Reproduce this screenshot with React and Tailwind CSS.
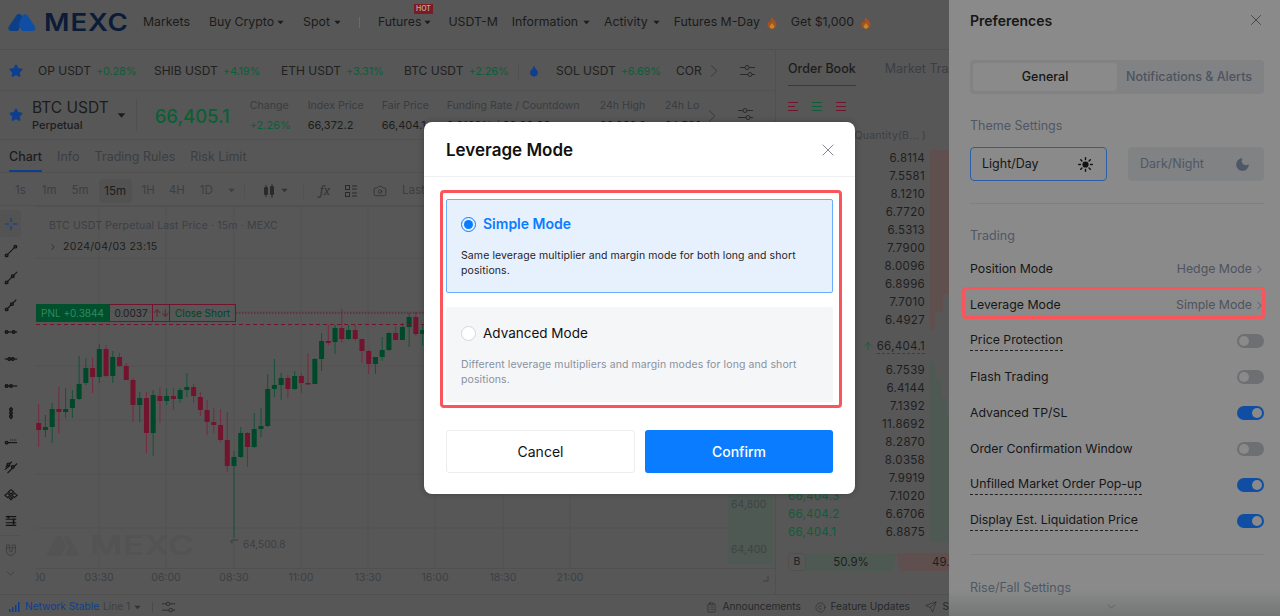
import React from "react";
import { Star, ChevronRight, ChevronDown, X, Moon, Camera, ClipboardList, Copyright, Send, Magnet, Droplet, ArrowUp } from "lucide-react";

const Caret = ({ className = "" }) => (
  <svg width="7" height="5" viewBox="0 0 8 5" className={`shrink-0 ${className}`}><path d="M0.5 0.5h7L4 4.500z" fill="currentColor" /></svg>
);
const Fire = () => (
  <svg width="10" height="12" viewBox="0 0 11 13" className="ml-[7px] shrink-0">
    <path d="M5.500 0C6 2.500 10.500 4.500 10.500 8.200 10.500 11 8.300 13 5.500 13S.5 11 .5 8.200C.5 6.500 1.500 5 2.600 4.200c0 1 .4 1.800 1.100 2.100C3.600 4 4.200 1.800 5.500 0z" fill="#a8501e" />
    <path d="M5.600 6.500c.4 1.300 2.400 2.200 2.400 3.900 0 1.400-1.100 2.400-2.500 2.400S3 11.800 3 10.400c0-1.400 1.900-2.300 2.600-3.900z" fill="#b9892b" />
  </svg>
);

function Header() {
  return (
    <div className="h-[50px] flex items-center border-b border-[#4f4f4f] pl-2 pb-[4px] shrink-0 text-[12.300px] text-[#1b1b1b] whitespace-nowrap">
      <svg width="28" height="17" viewBox="0 0 29 18" className="shrink-0">
        <path d="M8.500 1.500 C10 -.5 12.500 -.5 14 1.500 L15.500 4 L10.500 18 H3 C.5 18 -.8 15.500 .5 13.500z" fill="#0c3f86" />
        <path d="M15 1.800 C16.500 -.4 19.200 -.4 20.600 1.800 L28.300 13.500 C29.600 15.600 28 18 25.800 18 H14.500 L10.800 11.500z" fill="#0f4ea3" />
      </svg>
      <span className="ml-[8px] w-[83px] inline-block origin-left scale-x-[1.15] text-[24px] leading-none font-semibold tracking-[0.800px] text-[#0b1b38]">MEXC</span>
      <span className="ml-[16px]">Markets</span>
      <span className="ml-[19px] flex items-center gap-[3px]">Buy Crypto<Caret /></span>
      <span className="ml-[19px] flex items-center gap-[4px]">Spot<Caret /></span>
      <span className="ml-[18px] w-px h-[11px] bg-[#6a6a6a]" />
      <span className="ml-[18px] flex items-center gap-[3px] relative">Futures<Caret />
        <span className="absolute -top-[9px] left-[36px] bg-[#7e1a22] text-[#b9a2a2] text-[7px] leading-[10px] px-[2px] font-semibold">HOT</span>
      </span>
      <span className="ml-[17px]">USDT-M</span>
      <span className="ml-[14px] flex items-center gap-[5px]">Information<Caret /></span>
      <span className="ml-[14px] flex items-center gap-[5px]">Activity<Caret /></span>
      <span className="ml-[14px] flex items-center">Futures M-Day<Fire /></span>
      <span className="ml-[14px] flex items-center">Get $1,000<Fire /></span>
    </div>
  );
}

const Pct = ({ children }) => <span className="text-[#0d5e3a] text-[11px] tracking-[-0.150px] ml-[5px]">{children}</span>;

function Sliders({ className = "" }) {
  return (
    <svg width="15" height="14" viewBox="0 0 15 14" className={`shrink-0 ${className}`} fill="none" stroke="#2a2a2a" strokeWidth="1">
      <path d="M0 3.500h5M9 3.500h6M0 10.500h8M12 10.500h3" />
      <circle cx="7" cy="3.500" r="2" /><circle cx="10" cy="10.500" r="2" />
    </svg>
  );
}

function Ticker() {
  return (
    <div className="h-[41px] flex items-center pt-[1px] border-b border-[#515151] text-[12px] text-[#202020] shrink-0 whitespace-nowrap">
      <Star size={14} className="ml-[9px] text-[#0e3f8e] fill-[#0e3f8e] shrink-0" />
      <span className="ml-[15px] w-[97px] shrink-0">OP USDT<Pct>+0.28%</Pct></span>
      <span className="ml-[19px] w-[108px] shrink-0">SHIB USDT<Pct>+4.19%</Pct></span>
      <span className="ml-[19px] w-[104px] shrink-0">ETH USDT<Pct>+3.31%</Pct></span>
      <span className="ml-[19px] w-[105px] shrink-0">BTC USDT<Pct>+2.26%</Pct></span>
      <span className="ml-[9px] w-px h-4 bg-[#505050] shrink-0" />
      <Droplet size={12} className="ml-[9px] text-[#0e3f8e] fill-[#0e3f8e] shrink-0" />
      <span className="ml-[16px] w-[101px] shrink-0">SOL USDT<Pct>+6.69%</Pct></span>
      <span className="ml-[19px] w-[26px] shrink-0">COR</span>
      <ChevronRight size={22} strokeWidth={0.900} className="ml-[1px] text-[#333] shrink-0" />
      <Sliders className="ml-[15px]" />
    </div>
  );
}

const Stat = ({ label, value, className = "", green }) => (
  <div className={`flex flex-col gap-[3px] text-[11px] leading-[16px] whitespace-nowrap shrink-0 ${className}`}>
    <span className="text-[10.600px] text-[#393c41]">{label}</span>
    <span className={green ? "text-[#0d5e3a]" : "text-[#1c1c1c]"}>{value}</span>
  </div>
);

function SymbolRow() {
  return (
    <div className="h-[49px] flex items-center border-b border-[#515151] shrink-0 text-[#1c1c1c] overflow-hidden">
      <Star size={14} className="ml-[9px] text-[#0e3f8e] fill-[#0e3f8e] shrink-0" />
      <div className="ml-[9px] flex flex-col shrink-0 -mt-[1px]">
        <span className="text-[15.500px] leading-[20px]">BTC USDT</span>
        <span className="text-[11px] leading-[14px] font-medium">Perpetual</span>
      </div>
      <Caret className="ml-[9px] scale-125" />
      <span className="ml-[11px] w-px h-[32px] bg-[#4f4f4f] shrink-0" />
      <span className="ml-[18px] w-[76px] mt-[3px] text-[18.500px] font-medium text-[#0a6035] shrink-0">66,405.1</span>
      <Stat className="ml-[19px] w-[40px]" label="Change" value="+2.26%" green />
      <Stat className="ml-[18px] w-[56px]" label="Index Price" value="66,372.2" />
      <Stat className="ml-[18px] w-[49px]" label="Fair Price" value="66,404.1" />
      <Stat className="ml-[16px] w-[138px]" label="Funding Rate / Countdown" value="0.0100% / 00:00:00" />
      <Stat className="ml-[15px] w-[50px]" label="24h High" value="66,939.9" />
      <div className="w-[35px] ml-[15px] overflow-hidden shrink-0"><Stat label="24h Low" value="64,500.8" /></div>
      <ChevronRight size={22} strokeWidth={0.900} className="ml-[1px] mt-[2px] text-[#333] shrink-0" />
      <Sliders className="ml-[15px] -mt-[3px]" />
    </div>
  );
}

function Tabs() {
  return (
    <div className="h-[33px] flex items-start pl-[9px] border-b border-[#515151] shrink-0 text-[12.500px] text-[#3b3e44]">
      <span className="h-[32px] leading-[33px] text-[#1c1c1c] font-medium border-b-2 border-[#0e3f8e]">Chart</span>
      <span className="ml-[15px] leading-[33px]">Info</span>
      <span className="ml-[15px] leading-[33px]">Trading Rules</span>
      <span className="ml-[15px] leading-[33px]">Risk Limit</span>
    </div>
  );
}

function Toolbar() {
  return (
    <div className="h-[33px] flex items-center pt-[3px] border-b border-[#515151] shrink-0 text-[11.500px] text-[#3b3e44] whitespace-nowrap">
      <span className="ml-[15px]">1s</span>
      <span className="ml-[16px]">1m</span>
      <span className="ml-[15px]">5m</span>
      <span className="ml-[10px] h-[24px] w-[33px] leading-[24px] text-center bg-[#525252] rounded-sm text-[#1c1c1c]">15m</span>
      <span className="ml-[10px]">1H</span>
      <span className="ml-[14px]">4H</span>
      <span className="ml-[15px]">1D</span>
      <Caret className="ml-[15px]" />
      <span className="ml-[9px] w-px h-4 bg-[#515151]" />
      <svg width="12" height="14" viewBox="0 0 12 14" className="ml-[18px]" fill="#2a2a2a"><rect x="1" y="3" width="4" height="8" rx="1" /><rect x="7" y="2" width="4" height="9" rx="1" /><path d="M3 1v12M9 0v14" stroke="#2a2a2a" /></svg>
      <Caret className="ml-[6px] text-[#333]" />
      <span className="ml-[15px] w-px h-4 bg-[#515151]" />
      <span className="ml-[16px] text-[14px] italic font-serif text-[#333]">fx</span>
      <svg width="12" height="12" viewBox="0 0 12 12" className="ml-[15px]" fill="none" stroke="#2a2a2a"><rect x=".5" y=".5" width="4" height="4" /><rect x=".5" y="7.500" width="4" height="4" /><path d="M7 1h5M7 4h5M7 8h5M7 11h5" /></svg>
      <Camera size={14} strokeWidth={1.200} className="ml-[16px] text-[#2a2a2a]" />
      <span className="ml-[15px]">Last Price</span>
    </div>
  );
}

const dot = (x, y) => <circle cx={x} cy={y} r="1.600" fill="#333" />;
const toolIcons = [
  <path key="a" d="M1 8h5M10 8h5M8 1v5M8 10v5" stroke="#0e3f8e" />,
  <g key="b"><path d="M3 13L13 3" />{dot(3, 13)}{dot(13, 3)}</g>,
  <g key="c"><path d="M1 15L15 1" />{dot(3, 13)}{dot(10, 6)}</g>,
  <g key="d"><path d="M2 14L14 2" />{dot(3, 13)}{dot(9, 7)}</g>,
  <g key="e"><path d="M1 8h14" />{dot(3, 8)}{dot(11, 8)}</g>,
  <g key="f"><path d="M1 8h14" />{dot(6, 8)}{dot(10, 8)}</g>,
  <g key="g"><path d="M1 8h14" />{dot(3, 8)}{dot(8, 8)}</g>,
  <g key="h"><path d="M8 1v14" />{dot(8, 4)}{dot(8, 8)}{dot(8, 12)}</g>,
  <g key="i"><path d="M7 8h8" strokeDasharray="1 1" /><path d="M4 11h11" />{dot(3, 11)}</g>,
  <g key="j"><path d="M2 8L9 2M4 15L15 4M1 11l6-5" />{dot(5, 5)}{dot(10, 8)}</g>,
  <g key="k"><path d="M8 3l3 2.500-3 2.500-3-2.500zM4 7l3 2.500-3 2.500-3-2.500zM12 7l3 2.500-3 2.500-3-2.500zM8 11l2 1.500-2 2-2-2z" /></g>,
  <g key="l"><path d="M2 3h12M2 6h12M2 10h12M2 13h12" /><path d="M5 2v3M11 5v7" strokeWidth="2" /></g>,
];

function LeftTools() {
  return (
    <div className="w-[21px] shrink-0 flex flex-col items-center pt-[4px] text-[#222]">
      {toolIcons.map((ic, i) => (
        <div key={i} className={`w-[21px] h-[27px] shrink-0 flex items-center justify-center ${i === 0 ? "bg-[#535353] rounded-sm" : ""}`}>
          <svg width="14" height="14" viewBox="0 0 16 16" fill="none" stroke="#141414" strokeWidth="1.300">{ic}</svg>
        </div>
      ))}
      <div className="w-[21px] h-px bg-[#515151] mt-[1px]" />
      <Magnet size={14} strokeWidth={1} className="mt-[6px] rotate-[135deg] text-[#333]" />
      <ChevronDown size={13} strokeWidth={1.200} className="mt-[11px] text-[#333]" />
    </div>
  );
}

const candles = [
  [0,404,423,430,447],[1,415,427,430,437],[1,403,409,427,443],[0,387,409,412,433],[1,388,409,412,418],
  [1,390,399,408,418],[1,356,384,399,400],[1,358,368,383,385],[0,358,368,377,393],[1,344,349,377,383],
  [0,345,349,376,377],[1,351,357,376,383],[0,353,357,366,367],[0,363,366,380,380],[0,378,380,405,422],
  [1,392,398,405,422],[0,392,398,433,453],[1,390,395,433,456],[0,387,396,401,423],[1,388,396,401,405],
  [0,388,396,399,410],[1,388,390,399,403],[1,373,387,390,397],[0,384,387,396,403],[0,392,397,410,416],
  [0,400,410,422,435],[0,408,422,425,433],[0,409,425,440,442],[0,412,440,466,472],[1,451,457,466,538],
  [1,427,433,457,458],[0,432,433,447,467],[1,413,429,447,448],[1,408,426,429,437],[1,374,389,426,427],
  [1,359,385,389,397],[1,373,378,385,400],[0,375,378,389,398],[1,371,376,389,390],[0,373,376,383,393],
  [0,353,383,384,384],[1,358,359,384,384],[1,333,341,359,371],[0,325,341,343,345],[1,325,328,342,354],
  [0,309,328,339,343],[1,325,330,339,340],[0,325,330,339,341],[0,339,339,351,363],[0,350,351,364,374],
  [1,357,357,364,374],[1,337,350,357,361],[1,332,333,350,351],[0,326,333,340,340],[1,323,327,340,340],
  [1,313,317,327,347],[0,312,317,334,336],[1,325,330,334,346],
];

function ChartSvg() {
  const axis = [["00",39],["03:30",99],["06:00",166],["08:30",234],["11:00",301],["13:30",368],["16:00",435],["18:30",503],["21:00",570]];
  return (
    <svg width="739" height="387" viewBox="36 206 739 387" className="block absolute inset-0" style={{ fontFamily: "Inter, sans-serif" }}>
      {axis.slice(1).map(([t, x]) => <path key={t} d={`M${x} 206V568`} stroke="#535353" />)}
      {[258, 312, 366, 420, 474, 528].map((y) => <path key={y} d={`M36 ${y}H728`} stroke="#535353" />)}
      <path d="M36 206.500H775M36 568.500H775" stroke="#505050" />
      <rect x="728" y="400" width="45" height="164" fill="#4f5953" />
      {candles.map(([g, wt, bt, bb, wb], i) => {
        const x = 38.700 + i * 6.735;
        const c = g ? "#00482a" : "#72142d";
        return (
          <g key={i}>
            <path d={`M${x} ${wt}V${wb}`} stroke={g ? "#145339" : "#762a42"} strokeWidth="1" />
            <rect x={x - 2.500} y={bt} width="5" height={Math.max(bb - bt, 1.500)} fill={c} />
          </g>
        );
      })}
      <path d="M236 313H775" stroke="#72142d" strokeDasharray="1.500 1.500" />
      <path d="M36 324.500H775" stroke="#72142d" strokeDasharray="4 3" />
      {axis.map(([t, x]) => <text key={t} x={x} y="581" textAnchor="middle" fontSize="10.500" fill="#3c3f44">{t}</text>)}
      <path d="M232 543.500V540M232 540L230 542M232 540H238" stroke="#3c3f44" fill="none" />
      <text x="243" y="548" fontSize="10" fill="#3c3f44">64,500.8</text>
      <text x="731" y="508" fontSize="10.500" fill="#3f4246">64,800</text>
      <text x="731" y="553" fontSize="10.500" fill="#3f4246">64,400</text>
      <path d="M763 581h5v-5" stroke="#3c3f44" fill="none" />
    </svg>
  );
}

function Chart() {
  return (
    <div className="flex-1 relative overflow-hidden">
      <ChartSvg />
      <span className="absolute left-[13px] top-[13px] text-[10.500px] leading-[13px] text-[#3c3f44] whitespace-nowrap tracking-[0.150px]">BTC USDT Perpetual Last Price · 15m · MEXC</span>
      <span className="absolute left-[12px] top-[34px] flex items-center text-[10.500px] leading-[13px] text-[#1c1c1c] tracking-[0.300px]"><ChevronRight size={10} strokeWidth={1.500} /><span className="ml-[5px]">2024/04/03 23:15</span></span>
      <div className="absolute left-0 top-[98px] h-[18px] flex text-[10px] leading-[16px] whitespace-nowrap">
        <span className="bg-[#00502d] text-[#2f8a61] w-[73px] text-center leading-[18px]">PNL +0.3844</span>
        <div className="flex border border-l-0 border-[#72142d]">
          <span className="w-[44px] text-center border-x border-[#72142d] text-[#1c1c1c]">0.0037</span>
          <span className="w-[17px] text-center border-r border-[#72142d] text-[#72142d]">↑↓</span>
          <span className="w-[65px] text-center text-[#00482a]">Close Short</span>
        </div>
      </div>
      <span className="absolute left-[-9px] top-[186px] w-[7px] h-[22px] bg-[#525252] rounded-sm" />
      <svg width="155" height="24" viewBox="0 0 155 24" className="absolute left-[9px] top-[327px]">
        <path d="M1 23L11 5C12.500 2 15 2 16.500 5L21 13 16 23zM19 5C20.500 2 23 2 24.500 5L35 23H20L24 14z" fill="#535353" />
        <text x="45" y="22" fontSize="27" fontWeight="600" textLength="104" lengthAdjust="spacingAndGlyphs" fill="#535353" fontFamily="Inter, sans-serif">MEXC</text>
      </svg>
    </div>
  );
}

function Footer() {
  return (
    <div className="h-[22px] pt-[3px] mt-auto border-t border-[#505050] flex items-center text-[10.200px] shrink-0 whitespace-nowrap text-[#25272b]">
      <svg width="11" height="10" viewBox="0 0 11 10" className="ml-[9px] shrink-0" fill="#0e3f8e"><rect x="0" y="7" width="1.500" height="3" /><rect x="3" y="5" width="1.500" height="5" /><rect x="6" y="3" width="1.500" height="7" /><rect x="9" y="0" width="1.500" height="10" /></svg>
      <span className="ml-[5px] w-[73px] text-[#0e3f8e]">Network Stable</span>
      <span className="ml-[5px] text-[#3c3f44]">Line 1</span>
      <Caret className="ml-[4px] text-[#333]" />
      <span className="ml-[11px] w-px h-[10px] bg-[#4a4a4a]" />
      <Sliders className="ml-[8px] scale-90" />
      <span className="flex-1" />
      <ClipboardList size={11} strokeWidth={1.200} className="shrink-0" />
      <span className="ml-[5px] w-[78px]">Announcements</span>
      <Copyright size={11} strokeWidth={1.200} className="ml-[15px] shrink-0" />
      <span className="ml-[4px] w-[80px]">Feature Updates</span>
      <Send size={12} strokeWidth={1.200} className="ml-[15px] shrink-0" />
      <span className="ml-[5px]">S</span>
    </div>
  );
}

const qtyUp = ["6.8114","7.5581","8.1210","6.7720","6.5313","7.7900","8.0096","6.8996","7.7010","6.4927"];
const upBars = [19,19,19,19,19,19,19,19,13,5];
const qtyDown = ["6.7539","6.4144","7.1392","11.8692","8.2870","8.0358","7.9919","7.1020","6.6706","6.8875"];
const downBars = [5,11,17,19,19,19,19,19,19,19];
const downPx = ["66,404.9","66,404.8","66,404.7","66,404.6","66,404.5","66,404.4","66,404.4","66,404.3","66,404.2","66,404.1"];

const BookRow = ({ q, w, red, p }) => (
  <div className="h-[18px] shrink-0 relative flex items-center justify-between pl-[12px] pr-[24px] text-[11.500px] tracking-[0.300px]">
    <span className={`${red ? "text-[#72142d]" : "text-[#0d5e3a]"}`}>{p}</span>
    <span className="text-[#1e1e1e]">{q}</span>
    <span className={`absolute left-[154px] top-0 bottom-0 ${red ? "bg-[#5f4f4f]" : "bg-[#4f5953]"}`} style={{ width: w }} />
  </div>
);

function Book() {
  return (
    <div className="w-[174px] shrink-0 border-l border-[#505050] flex flex-col overflow-hidden">
      <div className="h-[40px] flex items-start pl-[12px] text-[12.500px] whitespace-nowrap shrink-0">
        <span className="h-[36px] leading-[37px] border-b-[1.500px] border-[#0e3f8e] font-medium text-[#1c1c1c]">Order Book</span>
        <span className="ml-[29px] leading-[37px] text-[#3b3e44]">Market Trades</span>
      </div>
      <div className="h-[32px] flex items-center pl-[12px] gap-[13px] shrink-0">
        {["#72142d", "#0d5e3a", "#72142d"].map((c, i) => (
          <svg key={i} width="11" height="9" viewBox="0 0 11 9" stroke={c}><path d={i === 0 ? "M0 .5h10M0 4.500h7M0 8.500h10" : "M0 .5h10M0 4.500h10M0 8.500h10"} /></svg>
        ))}
      </div>
      <div className="h-[28px] flex items-center justify-end pr-[23px] text-[10.500px] tracking-[0.200px] text-[#3c3f44] shrink-0 whitespace-pre">Quantity(B... )</div>
      <div className="flex flex-col shrink-0">
        {qtyUp.map((q, i) => <BookRow key={q} q={q} w={upBars[i]} red p={`66,40${5 + (9 - i) % 2}.${9 - i}`} />)}
      </div>
      <div className="h-[32px] shrink-0 relative flex items-center justify-end pr-[24px] text-[11.500px] tracking-[0.300px] text-[#1e1e1e]">
        <span className="absolute left-[74px] w-[2px] h-[12px] bg-[#00502d]" />
        <ArrowUp size={12} strokeWidth={1.500} className="text-[#0d5e3a] mr-[3px]" />
        <span className="border-b border-dashed border-[#3c3f44] leading-[14px]">66,404.1</span>
      </div>
      <div className="flex flex-col shrink-0">
        {qtyDown.map((q, i) => <BookRow key={q} q={q} w={downBars[i]} p={downPx[i]} />)}
      </div>
      <div className="mt-[11px] ml-[12px] h-[18px] flex items-center text-[11.500px] text-[#1e1e1e] shrink-0">
        <span className="w-[18px] h-[18px] shrink-0 leading-[16px] text-center bg-[#575757] border border-[#505050] rounded-sm text-[10.500px]">B</span>
        <span className="w-[90px] shrink-0 h-full leading-[18px] bg-[#4f5953] text-center" style={{ clipPath: "polygon(0 0, 100% 0, 97% 100%, 0 100%)" }}>50.9%</span>
        <span className="ml-[1px] w-[60px] shrink-0 h-full leading-[18px] bg-[#5f4f4f] pl-[35px] whitespace-nowrap" style={{ clipPath: "polygon(0 0, 100% 0, 100% 100%, 5% 100%)" }}>49.1%</span>
      </div>
    </div>
  );
}

function Main() {
  return (
    <div className="w-[949px] h-[616px] shrink-0 bg-[#575757] flex flex-col overflow-hidden">
      <Header />
      <div className="flex flex-1 min-h-0">
        <div className="w-[775px] shrink-0 flex flex-col min-w-0">
          <Ticker />
          <SymbolRow />
          <Tabs />
          <Toolbar />
          <div className="flex h-[387px] shrink-0">
            <LeftTools />
            <div className="w-[15px] shrink-0" />
            <Chart />
          </div>
        </div>
        <Book />
      </div>
      <Footer />
    </div>
  );
}

const Toggle = ({ on }) => (
  <span className={`w-[27px] h-[14px] rounded-full flex items-center px-[2px] shrink-0 ${on ? "bg-[#0f4ea3] justify-end" : "bg-[#6d6f72] justify-start"}`}>
    <span className="w-[10px] h-[10px] rounded-full bg-[#8a8a8a]" />
  </span>
);

const PrefRow = ({ label, dashed, on }) => (
  <div className="h-[36px] flex items-center justify-between">
    <span className={`text-[12.300px] leading-[16px] text-[#161616] ${dashed ? "border-b border-dashed border-[#222] pb-[2px]" : ""}`}>{label}</span>
    <Toggle on={on} />
  </div>
);

const LinkRow = ({ label, value }) => (
  <div className="h-[36px] flex items-center justify-between">
    <span className="text-[12.300px] text-[#161616]">{label}</span>
    <span className="flex items-center text-[12.300px] text-[#4d5360]">{value}<ChevronRight size={13} strokeWidth={1.500} className="ml-[1px] -mr-[2px]" /></span>
  </div>
);

const SunFilled = () => (
  <svg width="15" height="15" viewBox="0 0 16 16" stroke="#111" strokeWidth="1.500" strokeLinecap="round"><circle cx="8" cy="8" r="3.300" fill="#111" stroke="none" /><path d="M8 .8v1.800M8 13.400v1.800M.8 8h1.800M13.400 8h1.800M2.900 2.900l1.300 1.300M11.800 11.800l1.300 1.300M2.900 13.100l1.300-1.300M11.800 4.200l1.300-1.300" /></svg>
);

function Preferences() {
  return (
    <div className="w-[331px] h-[616px] bg-[#8a8a8a] px-[21px] pr-[16px] relative overflow-hidden shrink-0">
      <div className="h-[40px] flex items-center justify-between">
        <span className="text-[14px] font-semibold text-[#161616]">Preferences</span>
        <X size={18} strokeWidth={1} className="text-[#333] -mr-[1px]" />
      </div>
      <div className="mt-[20px] h-[34px] bg-[#808283] rounded-sm flex p-[3px] text-[12.500px]">
        <span className="w-[144px] flex items-center justify-center bg-[#8a8a8a] rounded-sm text-[#161616] font-medium">General</span>
        <span className="flex-1 flex items-center justify-center text-[#4d5360] font-medium">Notifications &amp; Alerts</span>
      </div>
      <div className="mt-[24px] text-[12.500px] leading-[16px] text-[#4f5766]">Theme Settings</div>
      <div className="mt-[13px] flex justify-between">
        <div className="w-[137px] h-[34px] border border-[#2a5fa8] rounded-sm flex items-center justify-between pl-[11px] pr-[13px] text-[12.500px] text-[#161616]">Light/Day<SunFilled /></div>
        <div className="w-[136px] h-[34px] bg-[#808283] rounded-sm flex items-center justify-between pl-[12px] pr-[13px] text-[12.500px] text-[#4f5766]">Dark/Night<Moon size={17} fill="#4f5766" strokeWidth={0} /></div>
      </div>
      <div className="mt-[22px] h-px bg-[#7f8081]" />
      <div className="mt-[24px] text-[12.500px] leading-[16px] text-[#4f5766]">Trading</div>
      <div className="mt-[7px] flex flex-col">
        <LinkRow label="Position Mode" value="Hedge Mode" />
        <LinkRow label="Leverage Mode" value="Simple Mode" />
        <PrefRow label="Price Protection" dashed />
        <PrefRow label="Flash Trading" />
        <PrefRow label="Advanced TP/SL" on />
        <PrefRow label="Order Confirmation Window" />
        <PrefRow label="Unfilled Market Order Pop-up" dashed on />
        <PrefRow label="Display Est. Liquidation Price" dashed on />
      </div>
      <div className="mt-[15px] h-px bg-[#7f8081]" />
      <div className="mt-[25px] text-[12.500px] leading-[16px] text-[#4f5766]">Rise/Fall Settings</div>
      <div className="absolute left-0 right-0 bottom-0 h-[26px] bg-gradient-to-t from-[#747575] to-[#8a8a8a00] flex items-end justify-center pb-[3px] pr-[6px]">
        <ChevronDown size={13} strokeWidth={1.200} className="text-[#4d5360]" />
      </div>
      <div className="absolute left-[13px] top-[287px] w-[303px] h-[32px] border-[3px] border-[#f9555a] rounded-[4px]" />
    </div>
  );
}

const Radio = ({ on }) => on ? (
  <span className="w-[15px] h-[15px] rounded-full border-[1.500px] border-[#0a7cff] flex items-center justify-center shrink-0"><span className="w-[9px] h-[9px] rounded-full bg-[#0a7cff]" /></span>
) : (
  <span className="w-[15px] h-[15px] rounded-full border border-[#d5d7da] bg-white shrink-0" />
);

function Modal() {
  return (
    <div className="absolute left-[424px] top-[122px] w-[431px] h-[372px] bg-white rounded-[8px] flex flex-col shadow-[0_0_6px_rgba(0,0,0,0.25)]">
      <div className="h-[55px] border-b border-[#eff0f2] flex items-center justify-between pl-[22px] pr-[17px] shrink-0">
        <span className="mt-[3px] text-[17px] font-semibold text-[#111]">Leverage Mode</span>
        <X size={20} strokeWidth={1} className="mt-[1px] text-[#6b7280]" />
      </div>
      <div className="px-[22px] pt-[22px] flex flex-col relative">
        <div className="h-[94px] border border-[#6aaeff] bg-[#e7f1fe] rounded-[2px] pt-[15px] pl-[14px] pr-[22px]">
          <div className="flex items-center gap-[7px] text-[14px] leading-[18px] font-semibold text-[#0a7cff]"><Radio on />Simple Mode</div>
          <p className="mt-[16px] text-[10.500px] leading-[14.500px] tracking-[0.100px] text-[#1f2329]">Same leverage multiplier and margin mode for both long and short positions.</p>
        </div>
        <div className="h-[95px] mt-[14px] bg-[#f5f6f8] rounded-[2px] pt-[17px] pl-[15px] pr-[22px]">
          <div className="flex items-center gap-[7px] text-[13.500px] leading-[18px] text-[#111]"><Radio />Advanced Mode</div>
          <p className="mt-[16px] text-[10.500px] leading-[14.500px] tracking-[0.100px] text-[#8a919e]">Different leverage multipliers and margin modes for long and short positions.</p>
        </div>
        <div className="absolute left-[16px] top-[13px] w-[402px] h-[218px] border-[3px] border-[#f9555a] rounded-[4px]" />
      </div>
      <div className="mt-[28px] px-[22px] flex justify-between">
        <button className="w-[189px] h-[43px] border border-[#ebedf0] rounded-[3px] text-[14px] text-[#111]">Cancel</button>
        <button className="w-[188px] h-[43px] bg-[#0a7cff] rounded-[3px] text-[14px] font-medium text-white">Confirm</button>
      </div>
    </div>
  );
}

export default function App() {
  return (
    <div className="w-[1280px] h-[616px] relative flex overflow-hidden" style={{ fontFamily: "Inter, 'Noto Sans', sans-serif" }}>
      <Main />
      <Preferences />
      <Modal />
    </div>
  );
}
